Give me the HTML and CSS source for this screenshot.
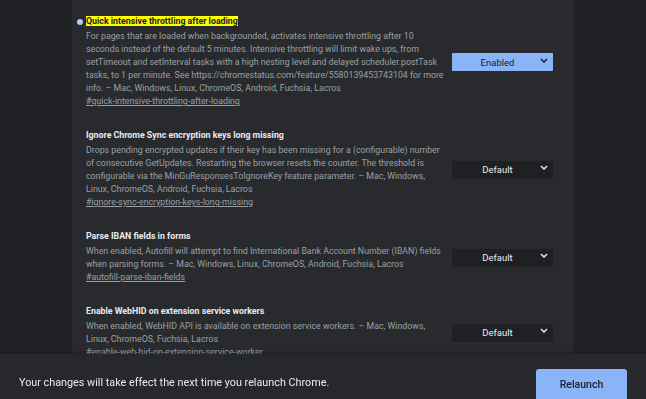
FILE: index.html
```html
<!DOCTYPE html>
<html>
<head>
  <title>Experiments</title>
  <link rel="stylesheet" href="styles.css">
  <meta name="viewport" content="width=device-width, initial-scale=1.0">
</head>
<body>
  <div class="panel">

    <div class="experiment">
      <div class="info">
        <h3 class="title marked"><span class="hit">Quick intensive throttling after loading</span></h3>
        <p class="desc">For pages that are loaded when backgrounded, activates intensive throttling after 10 seconds instead of the default 5 minutes. Intensive throttling will limit wake ups, from setTimeout and setInterval tasks with a high nesting level and delayed scheduler.postTask tasks, to 1 per minute. See https://chromestatus.com/feature/5580139453743104 for more info. – Mac, Windows, Linux, ChromeOS, Android, Fuchsia, Lacros</p>
        <a class="permalink" href="#quick-intensive-throttling-after-loading">#quick-intensive-throttling-after-loading</a>
      </div>
      <div class="select-wrap">
        <select class="flag-select enabled">
          <option>Default</option>
          <option selected>Enabled</option>
          <option>Disabled</option>
        </select>
        <svg class="chevron" width="8" height="5" viewBox="0 0 8 5"><polyline points="1,1 4,4 7,1" fill="none" stroke="currentColor" stroke-width="1.5"/></svg>
      </div>
    </div>

    <div class="experiment">
      <div class="info">
        <h3 class="title">Ignore Chrome Sync encryption keys long missing</h3>
        <p class="desc">Drops pending encrypted updates if their key has been missing for a (configurable) number of consecutive GetUpdates. Restarting the browser resets the counter. The threshold is configurable via the MinGuResponsesToIgnoreKey feature parameter. – Mac, Windows, Linux, ChromeOS, Android, Fuchsia, Lacros</p>
        <a class="permalink" href="#ignore-sync-encryption-keys-long-missing">#ignore-sync-encryption-keys-long-missing</a>
      </div>
      <div class="select-wrap">
        <select class="flag-select">
          <option selected>Default</option>
          <option>Enabled</option>
          <option>Disabled</option>
        </select>
        <svg class="chevron" width="8" height="5" viewBox="0 0 8 5"><polyline points="1,1 4,4 7,1" fill="none" stroke="currentColor" stroke-width="1.5"/></svg>
      </div>
    </div>

    <div class="experiment">
      <div class="info">
        <h3 class="title">Parse IBAN fields in forms</h3>
        <p class="desc">When enabled, Autofill will attempt to find International Bank Account Number (IBAN) fields when parsing forms. – Mac, Windows, Linux, ChromeOS, Android, Fuchsia, Lacros</p>
        <a class="permalink" href="#autofill-parse-iban-fields">#autofill-parse-iban-fields</a>
      </div>
      <div class="select-wrap">
        <select class="flag-select">
          <option selected>Default</option>
          <option>Enabled</option>
          <option>Disabled</option>
        </select>
        <svg class="chevron" width="8" height="5" viewBox="0 0 8 5"><polyline points="1,1 4,4 7,1" fill="none" stroke="currentColor" stroke-width="1.5"/></svg>
      </div>
    </div>

    <div class="experiment">
      <div class="info">
        <h3 class="title">Enable WebHID on extension service workers</h3>
        <p class="desc">When enabled, WebHID API is available on extension service workers. – Mac, Windows, Linux, ChromeOS, Fuchsia, Lacros</p>
        <a class="permalink" href="#enable-web-hid-on-extension-service-worker">#enable-web-hid-on-extension-service-worker</a>
      </div>
      <div class="select-wrap">
        <select class="flag-select">
          <option selected>Default</option>
          <option>Enabled</option>
          <option>Disabled</option>
        </select>
        <svg class="chevron" width="8" height="5" viewBox="0 0 8 5"><polyline points="1,1 4,4 7,1" fill="none" stroke="currentColor" stroke-width="1.5"/></svg>
      </div>
    </div>

  </div>

  <div class="relaunch-bar">
    <div class="relaunch-text">Your changes will take effect the next time you relaunch Chrome.</div>
    <button class="relaunch-button">Relaunch</button>
  </div>
</body>
</html>
```

FILE: styles.css
```css
html, body {
  height: 100%;
}
body {
  margin: 0;
  background-color: #202124;
  font-family: Roboto, "Liberation Sans", sans-serif;
  color: #9aa0a6;
  overflow: hidden;
}
.panel {
  width: 502px;
  box-sizing: border-box;
  margin: 0 auto;
  min-height: 100%;
  padding: 15px 21px 80px 14px;
  background-color: #292a2d;
  display: flex;
  flex-direction: column;
  gap: 21px;
}
.experiment {
  display: flex;
  align-items: center;
  gap: 4px;
}
.info {
  width: 362px;
  flex-shrink: 0;
}
.title {
  position: relative;
  margin: 0 0 2px 0;
  font-size: 8.8px;
  line-height: 13px;
  font-weight: bold;
  color: #e8eaed;
}
.title.marked::before {
  content: "";
  position: absolute;
  left: -9px;
  top: 3.5px;
  width: 6px;
  height: 6px;
  border-radius: 50%;
  background-color: #aecbfa;
}
.hit {
  background-color: #ffff00;
  color: #202124;
}
.desc {
  margin: 0;
  font-size: 8.8px;
  line-height: 13px;
}
.permalink {
  display: block;
  font-size: 8.8px;
  line-height: 13px;
  color: #9aa0a6;
  text-decoration: underline;
}
.select-wrap {
  position: relative;
  width: 101px;
  height: 18px;
  margin-bottom: 4px;
}
.flag-select {
  appearance: none;
  -webkit-appearance: none;
  width: 100%;
  height: 100%;
  border: none;
  border-radius: 1px;
  padding: 0 10px 0 0;
  background-color: #1f2023;
  color: #e8eaed;
  font-family: Roboto, "Liberation Sans", sans-serif;
  font-size: 9.5px;
  text-align: center;
  text-align-last: center;
  outline: none;
}
.flag-select.enabled {
  background-color: #8ab4f8;
  color: #202124;
}
.chevron {
  position: absolute;
  right: 5px;
  top: 7px;
  color: #e8eaed;
  pointer-events: none;
}
.flag-select.enabled + .chevron {
  color: #202124;
}
.relaunch-bar {
  position: fixed;
  left: 0;
  right: 0;
  top: 354px;
  height: 60px;
  box-sizing: border-box;
  padding: 15px 19px 0 19px;
  display: flex;
  justify-content: space-between;
  align-items: flex-start;
  background-color: #27282b;
  box-shadow: 0 -1px 3px rgba(0, 0, 0, 0.3);
}
.relaunch-text {
  font-size: 10.8px;
  line-height: 28px;
  color: #e8eaed;
}
.relaunch-button {
  width: 91px;
  height: 36px;
  border: none;
  border-radius: 3px;
  background-color: #8ab4f8;
  color: #202124;
  font-family: Roboto, "Liberation Sans", sans-serif;
  font-size: 10.5px;
  font-weight: 500;
  padding-bottom: 6px;
}
```
